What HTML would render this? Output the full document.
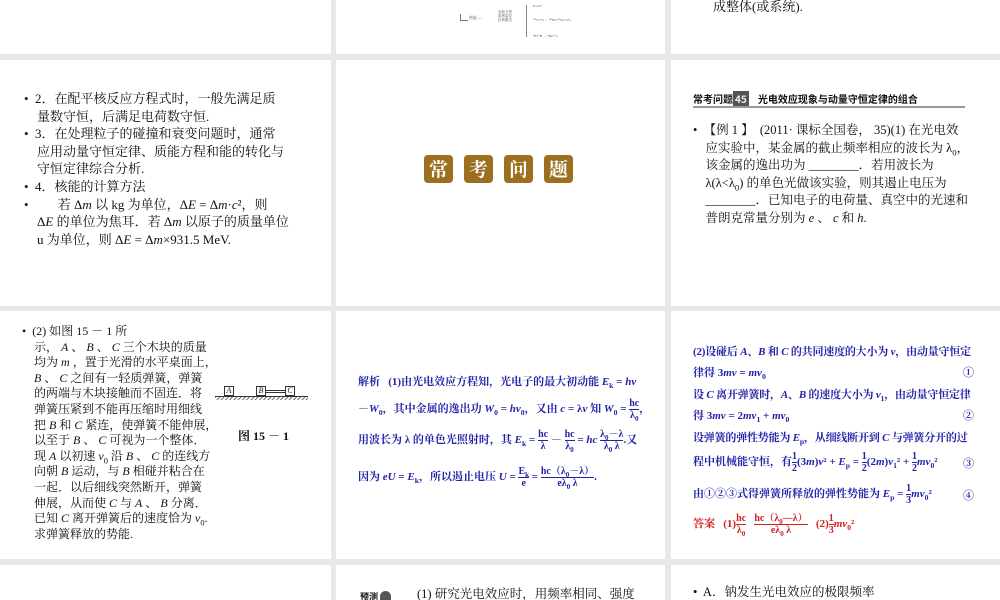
<!DOCTYPE html>
<html><head><meta charset="utf-8"><style>
*{margin:0;padding:0;box-sizing:border-box}
body{width:1000px;height:600px;background:#e8e8e8;position:relative;overflow:hidden;font-family:"Liberation Serif","Noto Serif CJK SC",serif;color:#111}
sub,sup{line-height:0;font-size:70%}
.p{position:absolute;background:#fff;overflow:hidden}
.a{position:absolute;white-space:nowrap}
.t{font-size:13px;line-height:17.6px}
.b{color:#2323a8;font-weight:bold;font-size:11px;font-family:"Liberation Serif","Noto Serif CJK SC",serif}
.fr{display:inline-block;vertical-align:middle;text-align:center;line-height:11px;font-size:10px}
.fr span{display:block}
.fr span:first-child{border-bottom:1px solid currentColor}
</style></head><body>
<!-- row 1 -->
<div class="p" style="left:0;top:0;width:331px;height:54px"></div>
<div class="p" style="left:336px;top:0;width:329px;height:54px">
 <div class="a" style="left:124px;top:14px;width:1px;height:6px;background:#777"></div>
 <div class="a" style="left:124px;top:20px;width:8px;height:1px;background:#777"></div>
 <div class="a" style="left:133px;top:15px;font-size:4px;color:#555">核能 —</div>
 <div class="a" style="left:162px;top:10px;font-size:3.5px;line-height:4px;color:#555">质能方程<br>重核裂变<br>轻核聚变</div>
 <div class="a" style="left:190px;top:5px;width:1px;height:32px;background:#888"></div>
 <div class="a" style="left:197px;top:4px;font-size:3.5px;color:#555">E=mc²</div>
 <div class="a" style="left:197px;top:18px;font-size:3.5px;color:#555">²³⁵U+¹n → ¹⁴¹Ba+⁹²Kr+3¹n</div>
 <div class="a" style="left:197px;top:34px;font-size:3.5px;color:#555">²H+³H → ⁴He+¹n</div>
</div>
<div class="p" style="left:671px;top:0;width:329px;height:54px">
 <div class="a t" style="left:42px;top:-2px">成整体(或系统).</div>
</div>
<!-- row 2 -->
<div class="p" style="left:0;top:60px;width:331px;height:246px">
 <div class="a t" style="left:24px;top:30px;white-space:normal;width:290px">
 <div>•&nbsp; 2．在配平核反应方程式时，一般先满足质<br>&nbsp;&nbsp;&nbsp;&nbsp;量数守恒，后满足电荷数守恒.</div>
 <div>•&nbsp; 3．在处理粒子的碰撞和衰变问题时，通常<br>&nbsp;&nbsp;&nbsp;&nbsp;应用动量守恒定律、质能方程和能的转化与<br>&nbsp;&nbsp;&nbsp;&nbsp;守恒定律综合分析.</div>
 <div>•&nbsp; 4．核能的计算方法</div>
 <div>•&nbsp;&nbsp;&nbsp;&nbsp;&nbsp;&nbsp;&nbsp;&nbsp; 若 Δ<i>m</i> 以 kg 为单位，Δ<i>E</i> = Δ<i>m</i>·<i>c</i>²，则<br>&nbsp;&nbsp;&nbsp;&nbsp;Δ<i>E</i> 的单位为焦耳．若 Δ<i>m</i> 以原子的质量单位<br>&nbsp;&nbsp;&nbsp;&nbsp;u 为单位，则 Δ<i>E</i> = Δ<i>m</i>×931.5 MeV.</div>
 </div>
</div>
<div class="p" style="left:336px;top:60px;width:329px;height:246px">
 <div class="a" style="left:88px;top:95px;display:flex;gap:11px">
  <div style="width:29px;height:28px;background:#9c6f1e;border-radius:4px;color:#fff;font:bold 19px/28px 'Noto Serif CJK SC',serif;text-align:center">常</div>
  <div style="width:29px;height:28px;background:#9c6f1e;border-radius:4px;color:#fff;font:bold 19px/28px 'Noto Serif CJK SC',serif;text-align:center">考</div>
  <div style="width:29px;height:28px;background:#9c6f1e;border-radius:4px;color:#fff;font:bold 19px/28px 'Noto Serif CJK SC',serif;text-align:center">问</div>
  <div style="width:29px;height:28px;background:#9c6f1e;border-radius:4px;color:#fff;font:bold 19px/28px 'Noto Serif CJK SC',serif;text-align:center">题</div>
 </div>
</div>
<div class="p" style="left:671px;top:60px;width:329px;height:246px">
 <div class="a" style="left:22px;top:31px;font:bold 10px 'Noto Sans CJK SC',sans-serif">常考问题<span style="background:#555;color:#eee;padding:0 2px">45</span>&nbsp;&nbsp;&nbsp;&nbsp;光电效应现象与动量守恒定律的组合</div>
 <div class="a" style="left:22px;top:46px;width:272px;height:2px;background:#999"></div>
 <div class="a t" style="left:22px;top:62px;font-size:12.5px;line-height:17.5px">•&nbsp; 【例 1 】&nbsp; (2011· 课标全国卷， 35)(1) 在光电效<br>&nbsp;&nbsp;&nbsp;&nbsp;应实验中，某金属的截止频率相应的波长为 λ<sub>0</sub>，<br>&nbsp;&nbsp;&nbsp;&nbsp;该金属的逸出功为 ________．若用波长为<br>&nbsp;&nbsp;&nbsp;&nbsp;λ(λ&lt;λ<sub>0</sub>) 的单色光做该实验，则其遏止电压为<br>&nbsp;&nbsp;&nbsp;&nbsp;________．已知电子的电荷量、真空中的光速和<br>&nbsp;&nbsp;&nbsp;&nbsp;普朗克常量分别为 <i>e</i> 、 <i>c</i> 和 <i>h</i>.</div>
</div>
<!-- row 3 -->
<div class="p" style="left:0;top:311px;width:331px;height:248px">
 <div class="a" style="left:22px;top:13px;font-size:12px;line-height:15.6px">•&nbsp; (2) 如图 15 － 1 所<br>&nbsp;&nbsp;&nbsp;&nbsp;示， <i>A</i> 、 <i>B</i> 、 <i>C</i> 三个木块的质量<br>&nbsp;&nbsp;&nbsp;&nbsp;均为 <i>m</i> ，置于光滑的水平桌面上，<br>&nbsp;&nbsp;&nbsp;&nbsp;<i>B</i> 、 <i>C</i> 之间有一轻质弹簧，弹簧<br>&nbsp;&nbsp;&nbsp;&nbsp;的两端与木块接触而不固连．将<br>&nbsp;&nbsp;&nbsp;&nbsp;弹簧压紧到不能再压缩时用细线<br>&nbsp;&nbsp;&nbsp;&nbsp;把 <i>B</i> 和 <i>C</i> 紧连，使弹簧不能伸展，<br>&nbsp;&nbsp;&nbsp;&nbsp;以至于 <i>B</i> 、 <i>C</i> 可视为一个整体．<br>&nbsp;&nbsp;&nbsp;&nbsp;现 <i>A</i> 以初速 <i>v</i><sub>0</sub> 沿 <i>B</i> 、 <i>C</i> 的连线方<br>&nbsp;&nbsp;&nbsp;&nbsp;向朝 <i>B</i> 运动，与 <i>B</i> 相碰并粘合在<br>&nbsp;&nbsp;&nbsp;&nbsp;一起．以后细线突然断开，弹簧<br>&nbsp;&nbsp;&nbsp;&nbsp;伸展，从而使 <i>C</i> 与 <i>A</i> 、 <i>B</i> 分离．<br>&nbsp;&nbsp;&nbsp;&nbsp;已知 <i>C</i> 离开弹簧后的速度恰为 <i>v</i><sub>0</sub>.<br>&nbsp;&nbsp;&nbsp;&nbsp;求弹簧释放的势能.</div>
 <div class="a" style="left:224px;top:75px;width:10px;height:10px;border:1px solid #333;font-size:8px;line-height:8px;font-style:italic;text-align:center">A</div>
 <div class="a" style="left:256px;top:75px;width:10px;height:10px;border:1px solid #333;font-size:8px;line-height:8px;font-style:italic;text-align:center">B</div>
 <div class="a" style="left:266px;top:79px;width:19px;height:3px;border-top:1px solid #333;border-bottom:1px solid #333"></div>
 <div class="a" style="left:285px;top:75px;width:10px;height:10px;border:1px solid #333;font-size:8px;line-height:8px;font-style:italic;text-align:center">C</div>
 <div class="a" style="left:215px;top:85px;width:93px;height:4px;border-top:1px solid #333;background:repeating-linear-gradient(135deg,#777 0 1px,#fff 1px 3px)"></div>
 <div class="a" style="left:238px;top:116px;font-size:12px;font-weight:bold">图 15 － 1</div>
</div>
<div class="p" style="left:336px;top:311px;width:329px;height:248px">
 <div class="a b" style="left:22px;top:62px">解析&nbsp;&nbsp; (1)由光电效应方程知，光电子的最大初动能 <i>E</i><sub>k</sub> = <i>hν</i></div>
 <div class="a b" style="left:22px;top:87px">－<i>W</i><sub>0</sub>，其中金属的逸出功 <i>W</i><sub>0</sub> = <i>hν</i><sub>0</sub>，又由 <i>c</i> = λ<i>ν</i> 知 <i>W</i><sub>0</sub> = <span class="fr"><span>hc</span><span>λ<sub>0</sub></span></span>，</div>
 <div class="a b" style="left:22px;top:118px">用波长为 λ 的单色光照射时，其 <i>E</i><sub>k</sub> = <span class="fr"><span>hc</span><span>λ</span></span> － <span class="fr"><span>hc</span><span>λ<sub>0</sub></span></span> = <i>hc</i> <span class="fr"><span>λ<sub>0</sub>－λ</span><span>λ<sub>0</sub> λ</span></span>.又</div>
 <div class="a b" style="left:22px;top:155px">因为 <i>eU</i> = <i>E</i><sub>k</sub>，所以遏止电压 <i>U</i> = <span class="fr"><span>E<sub>k</sub></span><span>e</span></span> = <span class="fr"><span>hc（λ<sub>0</sub>－λ）</span><span>eλ<sub>0</sub> λ</span></span>.</div>
</div>
<div class="p" style="left:671px;top:311px;width:329px;height:248px">
 <div class="a b" style="left:22px;top:32px;letter-spacing:-0.2px">(2)设碰后 <i>A</i>、<i>B</i> 和 <i>C</i> 的共同速度的大小为 <i>v</i>，由动量守恒定</div>
 <div class="a b" style="left:22px;top:53px">律得 3<i>mv</i> = <i>mv</i><sub>0</sub></div><div class="a b" style="left:292px;top:53px">①</div>
 <div class="a b" style="left:22px;top:75px;letter-spacing:-0.2px">设 <i>C</i> 离开弹簧时，<i>A</i>、<i>B</i> 的速度大小为 <i>v</i><sub>1</sub>，由动量守恒定律</div>
 <div class="a b" style="left:22px;top:96px">得 3<i>mv</i> = 2<i>mv</i><sub>1</sub> + <i>mv</i><sub>0</sub></div><div class="a b" style="left:292px;top:96px">②</div>
 <div class="a b" style="left:22px;top:118px;letter-spacing:-0.2px">设弹簧的弹性势能为 <i>E</i><sub>p</sub>，从细线断开到 <i>C</i> 与弹簧分开的过</div>
 <div class="a b" style="left:22px;top:140px">程中机械能守恒，有<span class="fr"><span>1</span><span>2</span></span>(3<i>m</i>)<i>v</i>² + <i>E</i><sub>p</sub> = <span class="fr"><span>1</span><span>2</span></span>(2<i>m</i>)<i>v</i><sub>1</sub>² + <span class="fr"><span>1</span><span>2</span></span><i>mv</i><sub>0</sub>²</div><div class="a b" style="left:292px;top:144px">③</div>
 <div class="a b" style="left:22px;top:172px">由①②③式得弹簧所释放的弹性势能为 <i>E</i><sub>p</sub> = <span class="fr"><span>1</span><span>3</span></span><i>mv</i><sub>0</sub>²</div><div class="a b" style="left:292px;top:176px">④</div>
 <div class="a b" style="left:22px;top:202px;color:#d02020">答案&nbsp;&nbsp; (1)<span class="fr"><span>hc</span><span>λ<sub>0</sub></span></span>&nbsp;&nbsp; <span class="fr"><span>hc（λ<sub>0</sub>—λ）</span><span>eλ<sub>0</sub> λ</span></span>&nbsp;&nbsp; (2)<span class="fr"><span>1</span><span>3</span></span><i>mv</i><sub>0</sub>²</div>
</div>
<!-- row 4 -->
<div class="p" style="left:0;top:565px;width:331px;height:35px"></div>
<div class="p" style="left:336px;top:565px;width:329px;height:35px">
 <div class="a" style="left:24px;top:25px;font:bold 9px 'Noto Sans CJK SC',sans-serif">预测<span style="display:inline-block;width:11px;height:11px;background:#555;border-radius:50% 50% 2px 2px;vertical-align:-2px;margin-left:2px"></span></div>
 <div class="a t" style="left:81px;top:21px;font-size:12.5px">(1) 研究光电效应时，用频率相同、强度</div>
</div>
<div class="p" style="left:671px;top:565px;width:329px;height:35px">
 <div class="a t" style="left:22px;top:19px;font-size:12.5px">•&nbsp; A．钠发生光电效应的极限频率</div>
</div>
</body></html>
